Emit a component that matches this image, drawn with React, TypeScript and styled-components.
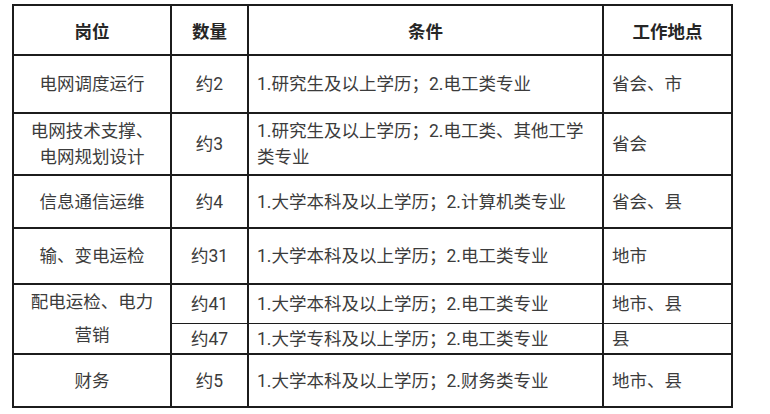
import styled, { createGlobalStyle } from "styled-components";

const GlobalStyle = createGlobalStyle`
  html, body {
    margin: 0;
    padding: 0;
    background: #ffffff;
  }
  body {
    font-family: Roboto, "Noto Sans CJK SC", "Noto Sans", sans-serif;
  }
`;

type Align = "center" | "left";

interface Row {
  post?: string[];
  postSpan?: number;
  postLineHeight?: number;
  count: string;
  cond: string;
  place: string;
  height: number;
  thinBottom?: boolean;
}

const rows: Row[] = [
  {
    post: ["电网调度运行"],
    count: "约2",
    cond: "1.研究生及以上学历；2.电工类专业",
    place: "省会、市",
    height: 58,
  },
  {
    post: ["电网技术支撑、", "电网规划设计"],
    postLineHeight: 26,
    count: "约3",
    cond: "1.研究生及以上学历；2.电工类、其他工学类专业",
    place: "省会",
    height: 62,
  },
  {
    post: ["信息通信运维"],
    count: "约4",
    cond: "1.大学本科及以上学历；2.计算机类专业",
    place: "省会、县",
    height: 53,
  },
  {
    post: ["输、变电运检"],
    count: "约31",
    cond: "1.大学本科及以上学历；2.电工类专业",
    place: "地市",
    height: 56,
  },
  {
    post: ["配电运检、电力", "营销"],
    postSpan: 2,
    postLineHeight: 33,
    count: "约41",
    cond: "1.大学本科及以上学历；2.电工类专业",
    place: "地市、县",
    height: 39,
    thinBottom: true,
  },
  {
    count: "约47",
    cond: "1.大学专科及以上学历；2.电工类专业",
    place: "县",
    height: 31,
  },
  {
    post: ["财务"],
    count: "约5",
    cond: "1.大学本科及以上学历；2.财务类专业",
    place: "地市、县",
    height: 53,
  },
];

export default function App() {
  const template = ["50px", ...rows.map((r) => `${r.height}px`)].join(" ");

  return (
    <Page>
      <GlobalStyle />
      <Table style={{ gridTemplateRows: template }}>
        <Head>岗位</Head>
        <Head>数量</Head>
        <Head>条件</Head>
        <Head>工作地点</Head>
        {rows.map((r, i) => (
          <RowGroup key={i}>
            {r.post && (
              <Cell
                $align="center"
                $span={r.postSpan || 1}
                $lh={r.postLineHeight || 26}
              >
                <div>
                  {r.post.map((line) => (
                    <div key={line}>{line}</div>
                  ))}
                </div>
              </Cell>
            )}
            <Cell $align="center" $thin={r.thinBottom}>
              {r.count}
            </Cell>
            <Cell $align="left" $thin={r.thinBottom}>
              <div>{r.cond}</div>
            </Cell>
            <Cell $align="left" $thin={r.thinBottom}>
              {r.place}
            </Cell>
          </RowGroup>
        ))}
      </Table>
    </Page>
  );
}

const Page = styled.div`
  padding: 4px 0 0 12px;
`;

const Table = styled.div`
  display: grid;
  grid-template-columns: 158px 77px 355px 129px;
  width: max-content;
  border-top: 2px solid #1c1c1c;
  border-left: 2px solid #1c1c1c;
`;

const RowGroup = styled.div`
  display: contents;
`;

const Head = styled.div`
  display: flex;
  align-items: center;
  justify-content: center;
  border-right: 2px solid #1c1c1c;
  border-bottom: 2px solid #1c1c1c;
  font-size: 17.5px;
  font-weight: 700;
  color: #262626;
`;

const Cell = styled.div<{
  $align: Align;
  $span?: number;
  $lh?: number;
  $thin?: boolean;
}>`
  display: flex;
  align-items: center;
  justify-content: ${(p) => (p.$align === "center" ? "center" : "flex-start")};
  text-align: ${(p) => p.$align};
  grid-row: span ${(p) => p.$span || 1};
  padding: 0 8px;
  border-right: 2px solid #1c1c1c;
  border-bottom: ${(p) => (p.$thin ? "1px" : "2px")} solid #1c1c1c;
  font-size: 17.5px;
  line-height: ${(p) => p.$lh || 26}px;
  color: #3c3c3c;
`;
